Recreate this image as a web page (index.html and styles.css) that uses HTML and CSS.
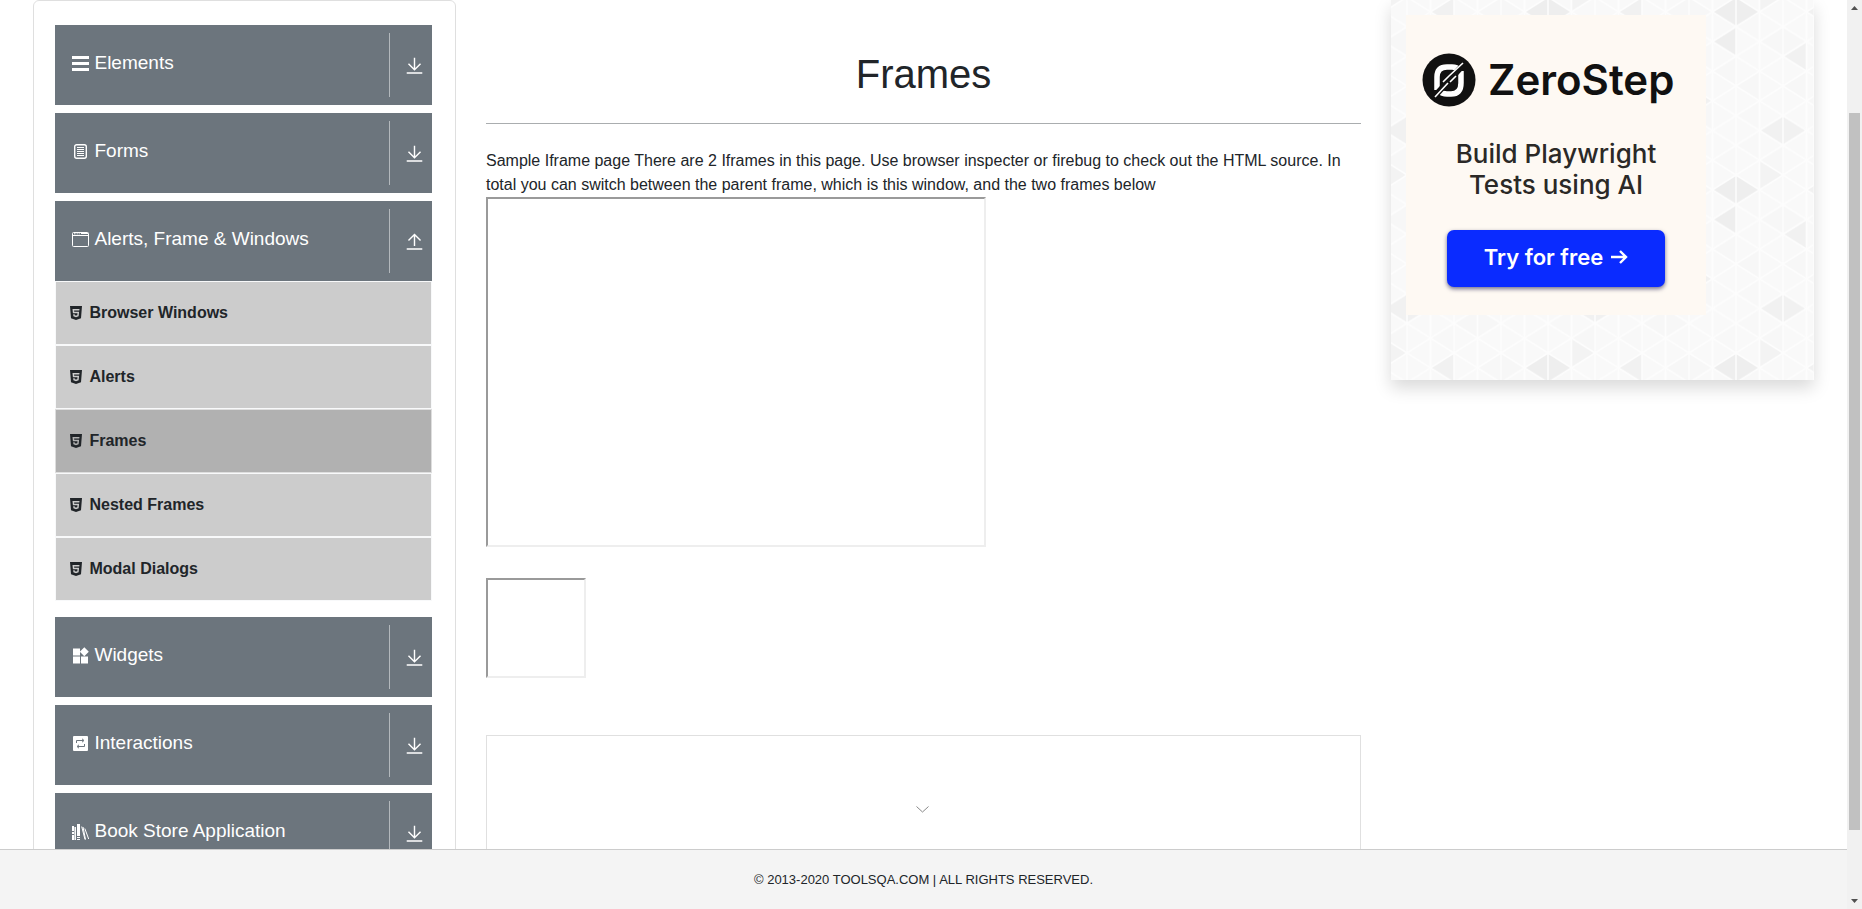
FILE: index.html
```
<!DOCTYPE html>
<html lang="en">
<head>
<meta charset="utf-8">
<title>Frames</title>
<link rel="stylesheet" href="styles.css">
</head>
<body>
<svg class="defs" aria-hidden="true">
  <defs>
    <symbol id="down" viewBox="0 0 24 24"><path fill="none" stroke="currentColor" stroke-width="2" d="M12 1v16M3.500 9.500L12 18l8.500-8.500M1 22.500h22"/></symbol>
    <symbol id="up" viewBox="0 0 24 24"><path fill="none" stroke="currentColor" stroke-width="2" d="M12 18.500V2.500M3.500 10.500L12 2l8.500 8.500M1 22.500h22"/></symbol>
    <symbol id="html5" viewBox="0 0 12 14"><path fill="currentColor" fill-rule="evenodd" d="M0 0h12l-1 12.300L6 14l-5-1.700zM2.500 3l.4 4.200h4.600l-.2 2-1.300.4-1.300-.4V8.300H3.200l.2 2L6 11.200l2.600-.9.500-4.500H4.200L4.100 4.400h5.200L9.500 3z"/></symbol>
  </defs>
</svg>
<div class="window">
  <div class="view">
    <main class="columns">
      <div class="col side">
        <nav class="menu">
          <section>
            <button class="group" type="button">
              <svg class="icon" viewBox="0 0 17 17"><path fill="currentColor" d="M0 1h17v3H0zM0 7h17v3H0zM0 13h17v3H0z"/></svg>
              <span class="label">Elements</span>
              <span class="toggle"><svg><use href="#down"/></svg></span>
            </button>
          </section>
          <section>
            <button class="group" type="button">
              <svg class="icon" viewBox="0 0 17 17"><rect x="2.700" y="1.700" width="11.600" height="13.600" rx="2" fill="none" stroke="currentColor" stroke-width="1.400"/><path fill="none" stroke="currentColor" d="M5 4.500h7M5 6.500h7M5 8.500h7M5 10.500h7M5 12.500h7"/></svg>
              <span class="label">Forms</span>
              <span class="toggle"><svg><use href="#down"/></svg></span>
            </button>
          </section>
          <section>
            <button class="group" type="button" aria-expanded="true">
              <svg class="icon" viewBox="0 0 17 17"><rect x=".5" y="1.500" width="16" height="14" rx="1" fill="none" stroke="currentColor"/><path fill="none" stroke="currentColor" d="M1 4.500h15M2 2.800h1.500M4.700 2.800h1M6.700 2.800h1M9 2.500h7"/></svg>
              <span class="label">Alerts, Frame &amp; Windows</span>
              <span class="toggle"><svg><use href="#up"/></svg></span>
            </button>
            <ul class="items">
              <li><a class="item" href="#"><svg><use href="#html5"/></svg>Browser Windows</a></li>
              <li><a class="item" href="#"><svg><use href="#html5"/></svg>Alerts</a></li>
              <li><a class="item active" href="#" aria-current="page"><svg><use href="#html5"/></svg>Frames</a></li>
              <li><a class="item" href="#"><svg><use href="#html5"/></svg>Nested Frames</a></li>
              <li><a class="item" href="#"><svg><use href="#html5"/></svg>Modal Dialogs</a></li>
            </ul>
          </section>
          <section>
            <button class="group" type="button">
              <svg class="icon" viewBox="0 0 17 17"><path fill="currentColor" d="M1 1.500h7v7H1zM1 9.500h7v7H1zM9 9.500h7v7H9zM12.300.3l4.500 4.500-4.500 4.500-4.500-4.500z"/></svg>
              <span class="label">Widgets</span>
              <span class="toggle"><svg><use href="#down"/></svg></span>
            </button>
          </section>
          <section>
            <button class="group" type="button">
              <svg class="icon" viewBox="0 0 17 17"><rect x="1" y="1" width="15" height="15" rx="1" fill="currentColor"/><g fill="none" stroke="#6c757d"><path d="M4.500 8V5.500h7M12.500 9v2.500h-7"/><path d="M10 3.800l2 1.700-2 1.700M7 9.800l-2 1.700 2 1.700"/></g></svg>
              <span class="label">Interactions</span>
              <span class="toggle"><svg><use href="#down"/></svg></span>
            </button>
          </section>
          <section>
            <button class="group" type="button">
              <svg class="icon" viewBox="0 0 17 17"><g fill="none" stroke="currentColor"><path stroke-width="2" d="M1 3v5M1 9v2M1 12v5"/><path stroke-width="1.500" d="M3.200 4v13"/><path stroke-width="3" d="M6.500 1v12M6.500 14v1M6.500 16v1"/><path d="M9.700 3.500l3.300 13M11 4l2.500 12.500M12.800 5.500L16.700 16"/></g></svg>
              <span class="label">Book Store Application</span>
              <span class="toggle"><svg><use href="#down"/></svg></span>
            </button>
          </section>
        </nav>
      </div>
      <div class="col body">
        <h1 class="title">Frames</h1>
        <p class="intro">Sample Iframe page There are 2 Iframes in this page. Use browser inspecter or firebug to check out the HTML source. In total you can switch between the parent frame, which is this window, and the two frames below</p>
        <iframe class="frame large" title="Large frame"></iframe>
        <iframe class="frame small" title="Small frame"></iframe>
        <div class="banner">
          <svg class="chevron" viewBox="0 0 13 7"><path fill="none" stroke="#888" d="M.5.5l6 5.500 6-5.500"/></svg>
        </div>
      </div>
      <div class="col side">
        <aside class="promo">
          <svg class="texture" aria-hidden="true">
            <defs>
              <pattern id="shades" width="188" height="178" patternUnits="userSpaceOnUse" patternTransform="translate(157 -3)">
                <g fill="#f7f7f7">
                  <path d="M24 45L47 30 71 45 47 59zM94 60L118 45 141 60 118 74zM71 104L94 89 118 104 94 119zM118 15L141 0 165 15 141 30zM141 119L165 104V134zM0 89L24 74V104zM24 163L47 148V178zM94 148L118 134 141 148 118 163zM165 75L188 60V89zM47 89L71 75V104z"/>
                </g>
                <path fill="#f8f8f8" d="M0 30L24 45V15zM71 15L94 0V30zM118 104L141 89V119zM0 148L24 134V163zM71 163L94 148V178zM0 119L24 104V134zM141 60L165 45V75zM165 163L188 148V178z"/>
                <path fill="#eee" d="M0 0L24 15 0 30zM188 0L165 15 188 30zM188 30L165 45 188 59z"/>
                <path fill="#f1f1f1" d="M71 45L47 60 71 74zM24 133L47 119 71 133 47 148zM94 0L71 15 94 30zM141 89L165 104 141 119z"/>
                <path fill="#f3f3f3" d="M24 163L47 178H24zM24 15L47 0H24z"/>
              </pattern>
              <pattern id="lattice" width="47" height="29.667" patternUnits="userSpaceOnUse" patternTransform="translate(157 -3)">
                <path fill="none" stroke="#fdfdfd" stroke-width="1.500" d="M0 0V30M47 0V30M23.500 0V30M0 0L47 29.667M47 0L0 29.667"/>
              </pattern>
            </defs>
            <rect width="100%" height="100%" fill="#f9f9f9"/>
            <rect width="100%" height="100%" fill="url(#shades)"/>
            <rect width="100%" height="100%" fill="url(#lattice)"/>
          </svg>
          <a class="ad" href="#">
            <span class="brand">
              <svg class="logo" viewBox="0 0 54 54"><circle cx="27" cy="27" r="26.500" fill="#111"/><path fill="none" stroke="#fff" stroke-width="5.500" d="M15 37V24q0-10 10-10h5q5 0 8 3M39 18v12q0 11-10 11h-4q-5 0-8-3"/><path stroke="#111" stroke-width="6" d="M11 45L43 10"/><path stroke="#fff" stroke-width="1.600" fill="none" d="M13 44l13-14M27 23l14-13M28 29l6-6M21 29l6-6"/></svg>
              <span>ZeroStep</span>
            </span>
            <span class="pitch">Build Playwright<br>Tests using AI</span>
            <span class="cta">Try for free <svg viewBox="0 0 17 14"><path fill="none" stroke="currentColor" stroke-width="2.400" d="M0 7h15M9 1l6 6-6 6"/></svg></span>
          </a>
        </aside>
      </div>
    </main>
    <footer class="footer">© 2013-2020 TOOLSQA.COM | ALL RIGHTS RESERVED.</footer>
  </div>
  <div class="scrollbar" aria-hidden="true">
    <svg viewBox="0 0 7 4"><path fill="#505050" d="M0 4L3.500 0 7 4z"/></svg>
    <div class="track"><div class="thumb"></div></div>
    <svg viewBox="0 0 7 4"><path fill="#505050" d="M0 0L3.500 4 7 0z"/></svg>
  </div>
</div>
</body>
</html>
```
FILE: styles.css
```
* { box-sizing: border-box; }
body {
  margin: 0;
  color: #212529;
  background: #fff;
  font: 16px/24px "Liberation Sans", Arial, sans-serif;
}
.defs { position: absolute; width: 0; height: 0; }
.window { display: flex; height: 100vh; overflow: hidden; }
.view { flex: 1; min-width: 0; display: flex; flex-direction: column; }
.columns { flex: 1; min-height: 0; overflow: hidden; display: flex; padding: 0 1%; }
.col { padding: 0 15px; }
.side { width: 25%; }
.body { width: 50%; }

.menu {
  display: flex;
  flex-direction: column;
  gap: 8px;
  padding: 24px 23px 24px 21px;
  border: 1px solid rgba(0, 0, 0, .125);
  border-radius: 6px;
}
.group {
  display: flex;
  width: 100%;
  height: 80px;
  padding: 8px 8px 8px 16px;
  border: 0;
  color: #fff;
  background: #6c757d;
  font: 19px/24px "Liberation Sans", Arial, sans-serif;
  text-align: left;
}
.icon { width: 19px; height: 17px; margin-top: 22px; }
.label { flex: 1; margin: 18px 0 0 4px; }
.toggle { width: 35px; height: 64px; padding: 24px 0 0 16px; border-left: 1px solid #b3b8bc; }
.toggle svg { display: block; width: 17px; height: 17px; }
.items { margin: 0 0 8px; padding: 0; list-style: none; }
.item {
  display: flex;
  align-items: flex-start;
  gap: 7px;
  height: 64px;
  padding: 19px 14px;
  border: 1px solid #f8f9fa;
  background: #ccc;
  color: #212529;
  font-weight: 700;
  text-decoration: none;
}
.item svg { width: 12px; height: 14px; margin-top: 5px; }
.item.active { background: #b1b1b1; border-color: #dedede; }

.title {
  margin: 0 0 25px;
  padding: 50px 0 25px;
  border-bottom: 1px solid #aaadaf;
  font-size: 40px;
  font-weight: 400;
  line-height: 48px;
  text-align: center;
}
.intro { margin: 0; }
.frame { display: block; border: 2px inset #eee; }
.large { width: 500px; height: 350px; max-width: 100%; margin-bottom: 31px; }
.small { width: 100px; height: 100px; margin-bottom: 57px; }
.banner {
  display: flex;
  justify-content: center;
  height: 250px;
  padding: 70px 3px 0 0;
  border: 1px solid #e0e0e0;
}
.chevron { width: 13px; height: 7px; }

.promo {
  position: relative;
  padding: 15px 15px 65px;
  box-shadow: 0 8px 16px rgba(0, 0, 0, .15);
}
.texture { position: absolute; inset: 0; width: 100%; height: 100%; }
.ad {
  position: relative;
  display: flex;
  flex-direction: column;
  align-items: center;
  width: 300px;
  height: 300px;
  padding-top: 38px;
  background: #fef9f3;
  color: #2b2927;
  font-family: Inter, sans-serif;
  text-decoration: none;
}
.brand { display: flex; align-items: center; gap: 12px; width: 100%; padding-left: 16px; color: #111; font-size: 42px; line-height: 54px; font-weight: 600; }
.logo { width: 54px; height: 54px; }
.pitch { margin-top: 31px; font-size: 26px; line-height: 31px; font-weight: 500; text-align: center; }
.cta {
  display: flex;
  align-items: center;
  justify-content: center;
  gap: 8px;
  width: 218px;
  height: 57px;
  margin-top: 30px;
  padding-bottom: 3px;
  border-radius: 7px;
  background: #0a2bff;
  box-shadow: 0 2px 4px rgba(0, 0, 60, .55);
  color: #fff;
  font-size: 22px;
  font-weight: 600;
}
.cta svg { width: 17px; height: 14px; }

.footer {
  height: 60px;
  padding-top: 18px;
  border-top: 1px solid #ccc;
  background: #f4f4f4;
  font-size: 13px;
  text-align: center;
}
.scrollbar { display: flex; flex-direction: column; align-items: center; width: 15px; padding: 6px 0; background: #f1f1f1; }
.scrollbar svg { width: 7px; height: 4px; }
.track { flex: 1; width: 11px; padding: 103px 0 69px; }
.thumb { height: 100%; background: #c1c1c1; }
```
